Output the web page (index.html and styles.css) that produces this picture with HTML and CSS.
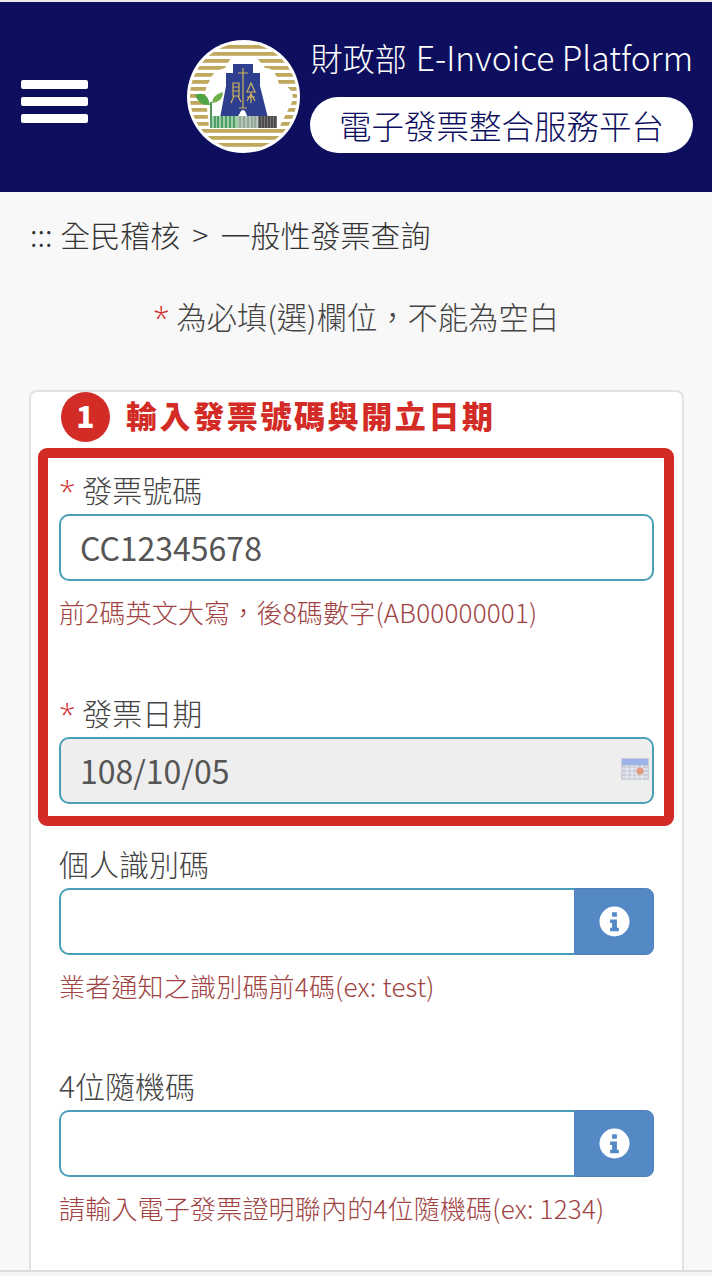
FILE: index.html
```html
<!DOCTYPE html>
<html lang="zh-Hant">
<head>
  <meta charset="UTF-8" />
  <meta name="viewport" content="width=device-width, initial-scale=1.0" />
  <title>電子發票整合服務平台</title>
  <link rel="stylesheet" href="styles.css">
</head>
<body>
  <header class="topbar">
    <button class="menu-button" aria-label="menu"><span></span><span></span><span></span></button>
    <div class="brand">
      <svg class="logo" viewBox="0 0 113 113">
        <defs>
          <clipPath id="logoClip"><circle cx="56.5" cy="56.5" r="53.5"/></clipPath>
        </defs>
        <circle cx="56.5" cy="56.5" r="56.5" fill="#fff"/>
        <g clip-path="url(#logoClip)" fill="#bfa95f">
          <rect x="0" y="5" width="113" height="3.8"/>
          <rect x="0" y="12" width="113" height="3.8"/>
          <rect x="0" y="19" width="113" height="3.8"/>
          <rect x="0" y="26" width="113" height="3.8"/>
          <rect x="0" y="33" width="113" height="3.8"/>
          <rect x="0" y="40" width="113" height="3.8"/>
          <rect x="0" y="47" width="113" height="3.8"/>
          <rect x="0" y="54" width="113" height="3.8"/>
          <rect x="0" y="61" width="113" height="3.8"/>
          <rect x="0" y="68" width="113" height="3.8"/>
          <rect x="0" y="75" width="113" height="3.8"/>
          <rect x="0" y="82" width="113" height="3.8"/>
          <rect x="0" y="89" width="113" height="3.8"/>
          <rect x="0" y="96" width="113" height="3.8"/>
          <rect x="0" y="103" width="113" height="3.8"/>
        </g>
        <path d="M22 42 Q26 30 38 28 L44 18 L70 18 L78 28 Q88 27 92 44 Q106 46 106 60 L92 88 L22 88 L20 68 Q16 50 22 42 Z" fill="#fff"/>
        <path d="M46 24 L66 24 L66 33 L73 33 L73 46 L81 78 L61 78 L58 71 Q56 69 54 71 L50 78 L33 78 L39 46 L39 33 L46 33 Z" fill="#2f3f8f"/>
        <g fill="none" stroke="#cdb35c" stroke-width="1.2">
          <path d="M56 28 V68 M51 33 H61 M52 68 H60"/>
          <path d="M46 43 H52 V56 H46 Z M46 47 H52 M46 51 H52 M47 56 L44 63 M51 56 L54 62"/>
          <path d="M64 43 L60 52 H68 Z M64 52 V63 M60 57 H68 M64 54 L60 61 M64 54 L68 61"/>
        </g>
        <path d="M24 62 V78" stroke="#4f9a52" stroke-width="2" fill="none"/>
        <path d="M23 65 Q12 66 8 55 Q20 50 23 65 Z" fill="#4fa544"/>
        <path d="M25 63 Q25 55 36 52 Q36 62 25 63 Z" fill="#6fb04a"/>
        <g>
          <rect x="23" y="76" width="28" height="12" fill="#9fcfa8"/>
          <rect x="51" y="76" width="20" height="12" fill="#b9c5bb"/>
          <rect x="71" y="76" width="19" height="12" fill="#777"/>
          <path d="M24 76 V88 M28 76 V88 M31 76 V88 M35 76 V88 M39 76 V88 M43 76 V88 M47 76 V88" stroke="#2f8a52" stroke-width="1.4"/>
          <path d="M53 76 V88 M57 76 V88 M61 76 V88 M65 76 V88 M68 76 V88" stroke="#7f9a88" stroke-width="1.3"/>
          <path d="M73 76 V88 M76 76 V88 M79 76 V88 M82 76 V88 M85 76 V88 M88 76 V88" stroke="#333" stroke-width="1.2"/>
        </g>
      </svg>
      <div class="brand-text">
        <div class="brand-title">財政部 <span class="brand-latin">E-Invoice Platform</span></div>
        <div class="brand-pill">電子發票整合服務平台</div>
      </div>
    </div>
  </header>

  <div class="crumbs">::: 全民稽核 <span class="crumb-sep">&gt;</span> 一般性發票查詢</div>
  <p class="required-note"><span class="star">*</span> 為必填(選)欄位，不能為空白</p>

  <main class="card">
    <h2 class="step-title"><span class="step-num">1</span><span class="step-text">輸入發票號碼與開立日期</span></h2>

    <div class="red-box">
      <div class="field">
        <label class="field-label"><span class="star">*</span> 發票號碼</label>
        <input class="text-input" type="text" value="CC12345678" />
        <div class="help">前2碼英文大寫，後8碼數字(AB00000001)</div>
      </div>
      <div class="field field-date">
        <label class="field-label"><span class="star">*</span> 發票日期</label>
        <div class="date-wrap">
          <input class="text-input date-input" type="text" value="108/10/05" readonly />
          <svg class="cal-icon" viewBox="0 0 28 24">
            <rect x="0" y="1" width="28" height="22" rx="1" fill="#c9cdd6"/>
            <rect x="1" y="2" width="26" height="6" fill="#9db2e6"/>
            <path d="M1 12 H27 M1 16 H27 M1 20 H27 M6 8 V23 M11 8 V23 M16 8 V23 M21 8 V23" stroke="#eef" stroke-width="1"/>
            <circle cx="19" cy="14" r="3.6" fill="#e09a80"/>
          </svg>
        </div>
      </div>
    </div>

    <div class="field field-code">
      <label class="field-label">個人識別碼</label>
      <div class="input-group">
        <input class="text-input" type="text" />
        <button class="info-button" aria-label="info">
          <svg viewBox="0 0 32 32"><circle cx="16" cy="16" r="15.5" fill="#fff"/><path d="M13.5 6.5 H18.5 V11 H13.5 Z M11.5 14 H18.5 V22.5 H20.5 V26 H11.5 V22.5 H13.5 V17.5 H11.5 Z" fill="#5589c6"/></svg>
        </button>
      </div>
      <div class="help">業者通知之識別碼前4碼(ex: test)</div>
    </div>

    <div class="field field-random">
      <label class="field-label">4位隨機碼</label>
      <div class="input-group">
        <input class="text-input" type="text" />
        <button class="info-button" aria-label="info">
          <svg viewBox="0 0 32 32"><circle cx="16" cy="16" r="15.5" fill="#fff"/><path d="M13.5 6.5 H18.5 V11 H13.5 Z M11.5 14 H18.5 V22.5 H20.5 V26 H11.5 V22.5 H13.5 V17.5 H11.5 Z" fill="#5589c6"/></svg>
        </button>
      </div>
      <div class="help">請輸入電子發票證明聯內的4位隨機碼(ex: 1234)</div>
    </div>
  </main>

  <div class="bottom-strip"></div>
</body>
</html>
```

FILE: styles.css
```css
html, body {
  height: 1276px;
  overflow: hidden;
}

body {
  margin: 0;
  background-color: #f8f8f8;
  color: #444;
  font-family: "Noto Sans CJK TC", "Open Sans", sans-serif;
  font-weight: 300;
  display: flex;
  flex-direction: column;
}

.topbar {
  background-color: #0d0f5e;
  border-top: 2px solid #e8e8e8;
  height: 190px;
  flex-shrink: 0;
  display: flex;
  align-items: center;
  justify-content: space-between;
  padding: 0 19px 0 21px;
}

.menu-button {
  width: 67px;
  background: none;
  border: none;
  padding: 0;
  display: flex;
  flex-direction: column;
  gap: 8px;
  margin-top: 9px;
}

.menu-button span {
  display: block;
  height: 9px;
  background: #fff;
  border-radius: 2px;
}

.brand {
  display: flex;
  align-items: center;
  gap: 10px;
  margin-top: -1px;
}

.logo {
  width: 113px;
  height: 113px;
}

.brand-text {
  display: flex;
  flex-direction: column;
  gap: 23px;
  width: 383px;
}

.brand-title {
  color: #fff;
  font-size: 32px;
  line-height: 34px;
  text-align: right;
  white-space: nowrap;
}

.brand-latin {
  font-size: 33.6px;
  margin-left: 2px;
}

.brand-pill {
  background: #fff;
  color: #0d0f5e;
  height: 56px;
  border-radius: 28px;
  font-size: 32.5px;
  line-height: 56px;
  text-align: center;
  white-space: nowrap;
}

.crumbs {
  font-size: 30px;
  line-height: 40px;
  padding: 22px 0 0 30px;
  color: #333;
  word-spacing: 1px;
}

.crumb-sep {
  margin: 0 4.5px;
}

.required-note {
  margin: 42px 0 0;
  font-size: 30.3px;
  line-height: 40px;
  text-align: center;
  color: #444;
}

.star {
  color: #d32f2f;
  font-family: "Open Sans", sans-serif;
  line-height: 0;
}

.card {
  margin: 54px 28px 0 29px;
  flex: 1;
  min-height: 0;
  background: #fff;
  border: 2px solid #e2e2e2;
  border-bottom: none;
  border-radius: 8px 8px 0 0;
  padding: 0 28px;
  box-sizing: border-box;
}

.step-title {
  margin: 0;
  height: 50px;
  padding: 0 0 6px 2px;
  display: flex;
  align-items: center;
  gap: 16px;
  color: #d32b25;
  font-size: 31px;
  font-weight: 900;
  letter-spacing: 2.6px;
}

.step-text {
  margin-bottom: 6px;
}

.step-num {
  width: 49px;
  height: 50px;
  border-radius: 50%;
  background: #d32b25;
  color: #fff;
  font-size: 30px;
  line-height: 46px;
  text-align: center;
  letter-spacing: 0;
}

.red-box {
  margin: 0 -20px 0 -21px;
  border: 10px solid #d32b25;
  border-radius: 9px;
  padding: 11px 10px 12px 11px;
}

.field-label {
  display: block;
  font-size: 30px;
  line-height: 40px;
  margin-bottom: 5px;
  color: #444;
}

.text-input {
  display: block;
  width: 100%;
  height: 67px;
  box-sizing: border-box;
  border: 2px solid #4a9fb8;
  border-radius: 10px;
  padding: 0 19px 2px;
  font-family: "Noto Sans CJK TC", "Open Sans", sans-serif;
  font-size: 32px;
  font-weight: 400;
  color: #555;
  background: #fff;
  outline: none;
}

.help {
  margin-top: 13px;
  font-size: 26px;
  line-height: 36px;
  letter-spacing: 0.2px;
  color: #a04343;
  white-space: nowrap;
}

.field-date {
  margin-top: 62px;
}

.date-wrap {
  position: relative;
}

.date-input {
  background: #eee;
}

.cal-icon {
  position: absolute;
  right: 5px;
  top: 20px;
  width: 28px;
  height: 24px;
}

.field-code {
  margin-top: 17px;
}

.field-random {
  margin-top: 61px;
}

.input-group {
  display: flex;
}

.input-group .text-input {
  flex: 1;
  min-width: 0;
  border-right: none;
  border-radius: 10px 0 0 10px;
}

.info-button {
  width: 80px;
  height: 67px;
  flex-shrink: 0;
  border: 1px solid #4f80bd;
  border-radius: 0 8px 8px 0;
  background: #5589c6;
  padding: 0;
  display: flex;
  align-items: center;
  justify-content: center;
}

.info-button svg {
  width: 31px;
  height: 31px;
}

.bottom-strip {
  height: 6px;
  flex-shrink: 0;
  background: #f5f5f5;
  border-top: 2px solid #dcdcdc;
  box-sizing: border-box;
}
```
